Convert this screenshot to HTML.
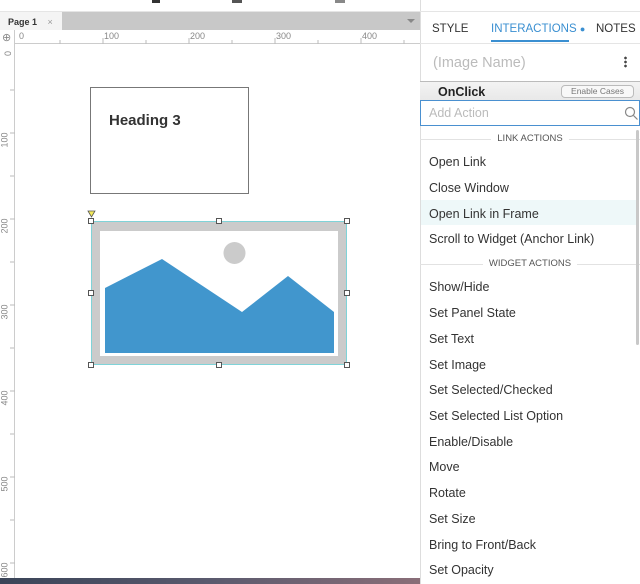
<!DOCTYPE html>
<html><head><style>
*{margin:0;padding:0;box-sizing:border-box}
body{width:640px;height:584px;overflow:hidden;background:#fff;font-family:"Liberation Sans",sans-serif;position:relative}
.abs{position:absolute}
.item{position:absolute;left:429px;font-size:12.5px;color:#333}
.sec{position:absolute;left:420px;width:220px;font-size:9.5px;color:#555;text-align:center}
.sec span{background:#fff;padding:0 6px;position:relative}
.sec:before{content:"";position:absolute;left:0;right:0;top:6px;border-top:1px solid #e2e2e2}
.h{position:absolute;width:6px;height:6px;border:1px solid #555;background:#fff}
</style></head><body>
<!-- top toolbar -->
<div class="abs" style="left:0;top:0;width:420px;height:12px;background:#fff;border-bottom:1px solid #e5e5e5"></div>
<div class="abs" style="left:152px;top:0;width:8px;height:3px;background:#333"></div>
<div class="abs" style="left:232px;top:0;width:10px;height:3px;background:#555"></div>
<div class="abs" style="left:335px;top:0;width:10px;height:3px;background:#888"></div>
<!-- tab bar -->
<div class="abs" style="left:0;top:12px;width:420px;height:18px;background:#c8c8c8"></div>
<div class="abs" style="left:0;top:12px;width:62px;height:18px;background:#f4f4f4;font-size:9px;font-weight:bold;color:#333;padding:5px 0 0 8px">Page 1 <span style="font-weight:normal;color:#999;margin-left:8px">×</span></div>
<div class="abs" style="left:407px;top:19px;width:0;height:0;border-left:4px solid transparent;border-right:4px solid transparent;border-top:4px solid #888"></div>
<!-- rulers -->
<div class="abs" style="left:0;top:30px;width:420px;height:14px;background:#fff;border-bottom:1px solid #ccc"></div>
<div class="abs" style="left:0;top:30px;width:15px;height:550px;background:#fff;border-right:1px solid #ccc"></div>
<div class="abs" style="left:2px;top:31px;font-size:11px;color:#888">⊕</div>
<div class="abs" style="left:19px;top:31px;font-size:9px;color:#888">0</div>
<div class="abs" style="left:104px;top:31px;font-size:9px;color:#888">100</div>
<div class="abs" style="left:190px;top:31px;font-size:9px;color:#888">200</div>
<div class="abs" style="left:276px;top:31px;font-size:9px;color:#888">300</div>
<div class="abs" style="left:362px;top:31px;font-size:9px;color:#888">400</div>
<div class="abs" style="left:3px;top:46px;font-size:9px;color:#888;transform:rotate(-90deg);transform-origin:center;width:10px">0</div>
<div class="abs" style="left:-3px;top:135px;font-size:9px;color:#888;transform:rotate(-90deg)">100</div>
<div class="abs" style="left:-3px;top:221px;font-size:9px;color:#888;transform:rotate(-90deg)">200</div>
<div class="abs" style="left:-3px;top:307px;font-size:9px;color:#888;transform:rotate(-90deg)">300</div>
<div class="abs" style="left:-3px;top:393px;font-size:9px;color:#888;transform:rotate(-90deg)">400</div>
<div class="abs" style="left:-3px;top:479px;font-size:9px;color:#888;transform:rotate(-90deg)">500</div>
<div class="abs" style="left:-3px;top:565px;font-size:9px;color:#888;transform:rotate(-90deg)">600</div>
<svg class="abs" style="left:0;top:0" width="420" height="584">
<g stroke="#bbb" stroke-width="1">
<path d="M60 40v4M146 40v4M232 40v4M318 40v4M404 40v4M103 38v6M189 38v6M275 38v6M361 38v6"/>
<path d="M10 90h4M10 176h4M10 262h4M10 348h4M10 434h4M10 520h4M10 133h5M10 219h5M10 305h5M10 391h5M10 477h5M10 563h5"/>
</g></svg>
<!-- heading box -->
<div class="abs" style="left:90px;top:87px;width:159px;height:107px;border:1px solid #777;background:#fff"></div>
<div class="abs" style="left:109px;top:112px;font-size:15px;font-weight:bold;color:#333">Heading 3</div>
<!-- image widget -->
<div class="abs" style="left:91px;top:221px;width:256px;height:144px;border:1px solid #7fd3d8"></div>
<div class="abs" style="left:92px;top:222px;width:254px;height:142px;background:#cbcbcb"></div>
<div class="abs" style="left:100px;top:231px;width:238px;height:125px;background:#fff"></div>
<svg class="abs" style="left:80px;top:200px" width="280" height="175">
<circle cx="154.5" cy="53" r="11" fill="#cbcbcb"/>
<polygon points="25,88 82,59 162,112 208,76 254,112 254,153 25,153" fill="#4196cd"/>
<polygon points="8,11 15,11 11.5,17" fill="#f2e85a" stroke="#555" stroke-width="0.8"/>
</svg>
<div class="h" style="left:88px;top:218px"></div><div class="h" style="left:216px;top:218px"></div><div class="h" style="left:344px;top:218px"></div>
<div class="h" style="left:88px;top:290px"></div><div class="h" style="left:344px;top:290px"></div>
<div class="h" style="left:88px;top:362px"></div><div class="h" style="left:216px;top:362px"></div><div class="h" style="left:344px;top:362px"></div>
<!-- bottom dark band -->
<div class="abs" style="left:0;top:578px;width:420px;height:6px;background:linear-gradient(90deg,#3a4458,#5a5a6e,#8a6e78)"></div>
<!-- right panel -->
<div class="abs" style="left:420px;top:0;width:220px;height:584px;background:#fff;border-left:1px solid #ddd"></div>
<div class="abs" style="left:420px;top:0;width:220px;height:12px;border-bottom:1px solid #e5e5e5"></div>
<div class="abs" style="left:432px;top:23px;font-size:11.5px;color:#333">STYLE</div>
<div class="abs" style="left:491px;top:23px;font-size:11.5px;color:#3a8fd1">INTERACTIONS <span style="font-size:9px">●</span></div>
<div class="abs" style="left:491px;top:40px;width:78px;height:2px;background:#3a8fd1"></div>
<div class="abs" style="left:596px;top:23px;font-size:11.5px;color:#333">NOTES</div>
<div class="abs" style="left:420px;top:43px;width:220px;height:1px;background:#e5e5e5"></div>
<div class="abs" style="left:433px;top:55px;font-size:14.5px;color:#bbb">(Image Name)</div>
<div class="abs" style="left:624px;top:56px;width:3px;height:12px;background:radial-gradient(circle,#444 1.2px,transparent 1.5px) 0 0/3px 4px"></div>
<div class="abs" style="left:420px;top:81px;width:220px;height:20px;background:linear-gradient(#f3f3f3,#e8e8e8);border-top:1px solid #bbb"></div>
<div class="abs" style="left:438px;top:85px;font-size:12.5px;font-weight:bold;color:#222">OnClick</div>
<div class="abs" style="left:561px;top:85px;width:73px;height:13px;border:1px solid #bbb;border-radius:4px;background:#f8f8f8;font-size:8.5px;color:#777;text-align:center;line-height:11px">Enable Cases</div>
<div class="abs" style="left:420px;top:100px;width:220px;height:26px;border:1px solid #4a90d0;background:#fff"></div>
<div class="abs" style="left:429px;top:106px;font-size:12.5px;color:#bbb">Add Action</div>
<svg class="abs" style="left:624px;top:106px" width="14" height="14"><circle cx="6" cy="6" r="4.5" fill="none" stroke="#888" stroke-width="1.2"/><path d="M9.5 9.5l4 4" stroke="#888" stroke-width="1.2"/></svg>
<div class="sec" style="top:133px"><span>LINK ACTIONS</span></div>
<div class="abs" style="left:421px;top:200px;width:215px;height:25px;background:#eef8f9"></div>
<div class="item" style="top:155px">Open Link</div>
<div class="item" style="top:181px">Close Window</div>
<div class="item" style="top:207px">Open Link in Frame</div>
<div class="item" style="top:232px">Scroll to Widget (Anchor Link)</div>
<div class="sec" style="top:258px"><span>WIDGET ACTIONS</span></div>
<div class="item" style="top:280px">Show/Hide</div>
<div class="item" style="top:306px">Set Panel State</div>
<div class="item" style="top:332px">Set Text</div>
<div class="item" style="top:358px">Set Image</div>
<div class="item" style="top:383px">Set Selected/Checked</div>
<div class="item" style="top:409px">Set Selected List Option</div>
<div class="item" style="top:435px">Enable/Disable</div>
<div class="item" style="top:460px">Move</div>
<div class="item" style="top:486px">Rotate</div>
<div class="item" style="top:512px">Set Size</div>
<div class="item" style="top:538px">Bring to Front/Back</div>
<div class="item" style="top:563px">Set Opacity</div>
<div class="abs" style="left:636px;top:130px;width:3px;height:215px;background:#c8c8c8;border-radius:2px"></div>
</body></html>
